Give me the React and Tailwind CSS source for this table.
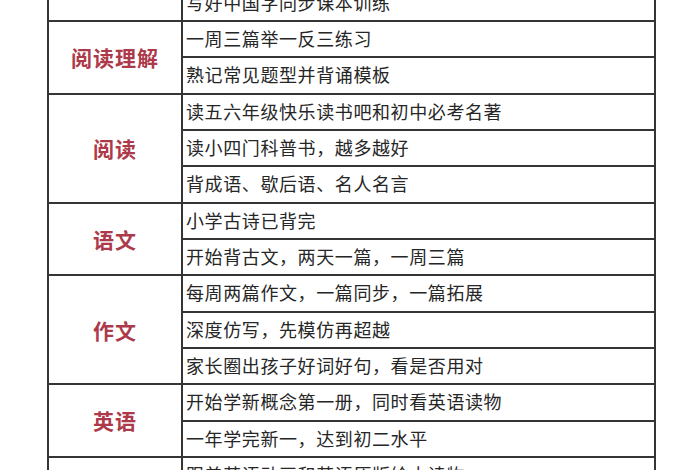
import React from 'react'

const groups = [
  { label: '', rows: ['写好中国字同步课本训练'] },
  { label: '阅读理解', rows: ['一周三篇举一反三练习', '熟记常见题型并背诵模板'] },
  { label: '阅读', rows: ['读五六年级快乐读书吧和初中必考名著', '读小四门科普书，越多越好', '背成语、歇后语、名人名言'] },
  { label: '语文', rows: ['小学古诗已背完', '开始背古文，两天一篇，一周三篇'] },
  { label: '作文', rows: ['每周两篇作文，一篇同步，一篇拓展', '深度仿写，先模仿再超越', '家长圈出孩子好词好句，看是否用对'] },
  { label: '英语', rows: ['开始学新概念第一册，同时看英语读物', '一年学完新一，达到初二水平'] },
  { label: '', rows: ['跟着英语动画和英语原版绘本读物'] },
]

function Group({ group }) {
  return (
    <div className="flex">
      <div className="w-[134px] shrink-0 border-t-2 border-r-2 border-[#353535] flex items-center justify-center pt-[5px]">
        <span className="text-[21px] font-bold tracking-[1px] text-[#ad3a4b]">{group.label}</span>
      </div>
      <div className="flex-1 flex flex-col">
        {group.rows.map((row, idx) => (
          <div key={idx} className="h-[36.33px] border-t-2 border-[#353535] flex items-center pl-[3px] pt-[3px]">
            <span className="text-[18px] tracking-[0.6px] text-[#262626]">{row}</span>
          </div>
        ))}
      </div>
    </div>
  )
}

export default function App() {
  return (
    <div
      className="w-[700px] h-[470px] overflow-hidden bg-white"
      style={{ fontFamily: '"Liberation Serif", "Noto Sans CJK SC", serif' }}
    >
      <div className="ml-[47px] w-[609px] mt-[-16.33px] border-l-2 border-r-2 border-[#353535]">
        {groups.map((group, idx) => (
          <Group key={idx} group={group} />
        ))}
      </div>
    </div>
  )
}
